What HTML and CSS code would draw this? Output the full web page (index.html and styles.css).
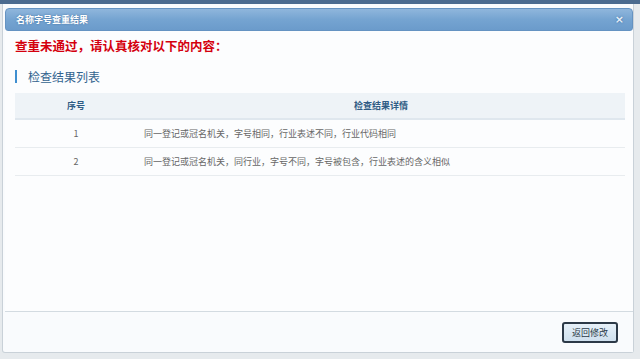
FILE: index.html
```html
<!DOCTYPE html>
<html lang="zh-CN">
<head>
	<meta charset="UTF-8">
	<title>名称字号查重结果</title>
	<link rel="stylesheet" href="styles.css">
</head>
<body>
	<div class="top-bar"></div>

	<div class="dialog">
		<!-- title -->
		<div class="dialog-title">
			<span>名称字号查重结果</span>
			<span class="close">×</span>
		</div>

		<div class="dialog-body">
			<p class="warn">查重未通过，请认真核对以下的内容：</p>

			<h3 class="sub-title">检查结果列表</h3>

			<table class="result">
				<thead>
					<tr>
						<th class="col-no">序号</th>
						<th>检查结果详情</th>
					</tr>
				</thead>
				<tbody>
					<tr>
						<td class="col-no">1</td>
						<td class="detail">同一登记或冠名机关，字号相同，行业表述不同，行业代码相同</td>
					</tr>
					<tr>
						<td class="col-no">2</td>
						<td class="detail">同一登记或冠名机关，同行业，字号不同，字号被包含，行业表述的含义相似</td>
					</tr>
				</tbody>
			</table>
		</div>

		<!-- footer -->
		<div class="dialog-footer">
			<button class="btn">返回修改</button>
		</div>
	</div>
</body>
</html>
```

FILE: styles.css
```css
html,
body {
	margin: 0;
	padding: 0;
	background: #e6eaed;
	font-family: "Noto Sans CJK SC", "Liberation Sans", sans-serif;
	overflow: hidden;
}

* {
	box-sizing: border-box;
}

.top-bar {
	height: 4px;
	background: #4b6b8f;
}

/* 弹框 */
.dialog {
	margin: 0 6px 0 2px;
	height: 349px;
	display: flex;
	flex-direction: column;
	background: #f9fbfd;
	border: 1px solid #c9d1d8;
	border-top: none;
	border-radius: 0 0 3px 3px;
	padding: 4px 0 0 2px;
}

.dialog-title {
	height: 23px;
	display: flex;
	align-items: center;
	justify-content: space-between;
	padding: 0 8px 0 10px;
	border-radius: 4px 4px 3px 3px;
	background: linear-gradient(#8fb6dc, #75a4d1 50%, #6b9bcb);
	border: 1px solid #6593c2;
	color: #fff;
	font-size: 9px;
	font-weight: bold;
	text-shadow: 0 0 2px #3d6c9c;
}

.close {
	font-family: "DejaVu Sans", sans-serif;
	font-size: 11px;
	font-weight: bold;
	color: #e8f0f8;
}

.dialog-body {
	flex: 1;
	background: #fcfdfe;
	padding: 6px 8px 0 10px;
}

.warn {
	margin: 0;
	line-height: 18px;
	font-size: 12.5px;
	font-weight: bold;
	color: #d4000e;
}

.sub-title {
	margin: 15px 0 10px;
	height: 13px;
	line-height: 13px;
	padding-left: 11px;
	border-left: 2px solid #3f8fd0;
	font-size: 12px;
	font-weight: normal;
	color: #33648f;
}

/* 表格 */
.result {
	width: 100%;
	border-collapse: collapse;
	font-size: 9px;
}

.result th {
	height: 26px;
	background: #eef3f7;
	border-bottom: 2px solid #dfe7ee;
	color: #2f5c85;
	font-weight: bold;
}

.result td {
	height: 28px;
	border-bottom: 1px solid #e8ecef;
	color: #666;
}

.col-no {
	width: 122px;
	text-align: center;
}

.detail {
	padding-left: 7px;
}

.dialog-footer {
	height: 41px;
	display: flex;
	align-items: center;
	justify-content: flex-end;
	padding-right: 15px;
	border-top: 1px solid #d3dbe1;
	background: #f9fbfd;
}

.btn {
	width: 56px;
	height: 21px;
	padding: 0;
	font-family: inherit;
	font-size: 9px;
	color: #2b3a48;
	background: linear-gradient(#e6f0f8, #cfe0ee);
	border: 2px solid #2c3947;
	border-radius: 3px;
	cursor: pointer;
}
```
